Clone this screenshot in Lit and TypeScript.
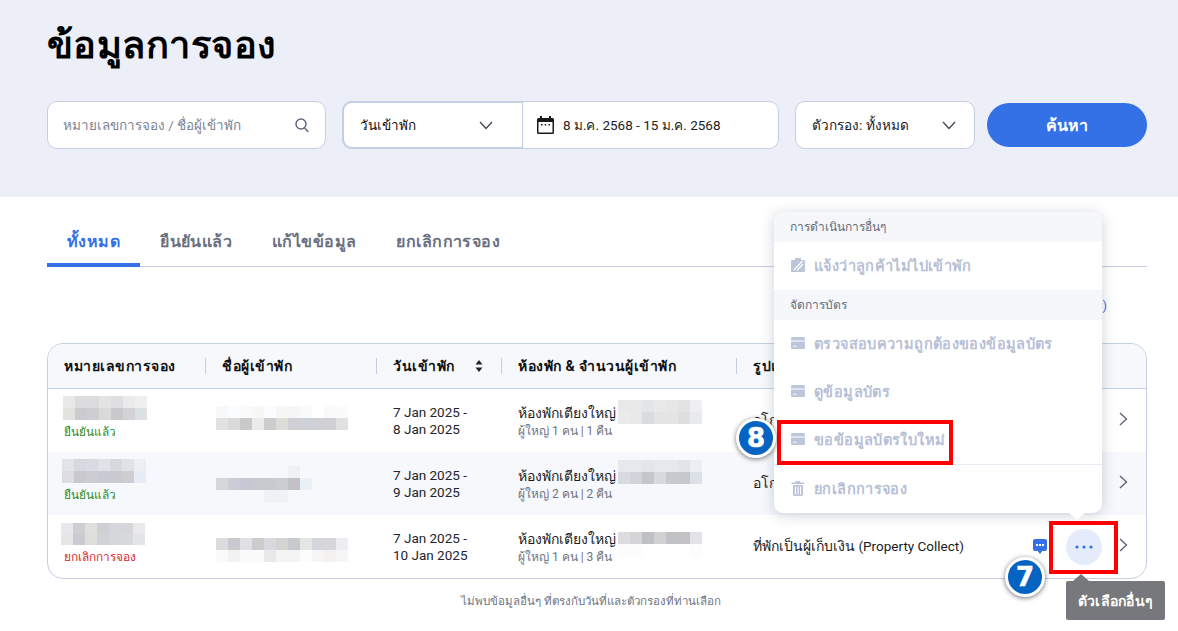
import { LitElement, html, css } from "lit";
import { customElement } from "lit/decorators.js";

type Mos = { rows: string[][]; cell?: number };

const hex = (s: string) => s.split(" ").map((c) => (c === "-" ? "transparent" : "#" + c));

const chevDown = html`<svg class="chev" width="16" height="16" viewBox="0 0 16 16" fill="none" stroke="#3c4252" stroke-width="1.2"><path d="M2 5l6 6.500L14 5"/></svg>`;
const chevRight = html`<svg class="chevr" width="12" height="18" viewBox="0 0 12 18" fill="none" stroke="#5b6478" stroke-width="1.4"><path d="M3 3l6.500 6L3 15"/></svg>`;
const cardIcon = html`<svg class="mi" width="14" height="12" viewBox="0 0 14 12"><path fill="#bcc5da" d="M1.500 0h11A1.500 1.500 0 0 1 14 1.500V3.500H0V1.500A1.500 1.500 0 0 1 1.500 0zM0 4.500h14v6a1.500 1.500 0 0 1-1.500 1.500h-11A1.500 1.500 0 0 1 0 10.500z"/><rect x="2" y="8.500" width="4" height="1.500" fill="#dfe4ef"/></svg>`;

const rows = [
  {
    id: { rows: [hex("e8e8e6 dcdcdf dcdcdf e4e4e4 dfdfe2 ebebeb f0f0f2"), hex("e2e2df cbcbcf cfcfd3 dadada c9c9cc d3d3d5 dde0e2")] } as Mos,
    idPad: 7, idLeft: 15,
    status: "ยืนยันแล้ว", cancel: false,
    name: { rows: [hex("f8f8f8 fafcff fafafa f7f7f5 fbfcff f8f7f5 f6f6f6 f9fafc ffffff fbfafa fbfbfb"), hex("e3e2e3 dadada c9c9cb eaebea cccccf dddcd9 d0d0d4 cfd1d9 d0d0d4 d0d0d3 e2e1e1")] } as Mos,
    nameTop: -14.5,
    d1: "7 Jan 2025 -", d2: "8 Jan 2025",
    room: { rows: [hex("e9e9ea e9e9ea e3e4e6 e9e9ea e6e6e7 e4e2e4 eeeff1"), hex("ebebeb e8e8e9 dadbdd e4e4e5 e4e4e5 dedede e9eaec")] } as Mos,
    roomTop: -13,
    guests: "ผู้ใหญ่ 1 คน | 1 คืน",
    pay: "อโกด้าเป็นผู้เก็บเงิน", payEn: "",
    more: false,
  },
  {
    id: { rows: [hex("e3e4ea d7d9e0 d9dbe2 e1e2e8 d7d8df e1e2e8 ebeef5"), hex("dcdde3 c8c8ce ccccd3 c9cad4 c9cad1 cdcdd2 e8ebf3")] } as Mos,
    idPad: 7, idLeft: 14,
    status: "ยืนยันแล้ว", cancel: false,
    name: { rows: [hex("- - - - - - f0f1f5 -"), hex("d6d7da cacdd5 c6c9d3 c9cad0 c9cad0 cccdd2 c2c2c6 e8f0f8"), hex("- - - - f0f1f5 f0f1f5 - -")] } as Mos,
    nameTop: -17.5,
    d1: "7 Jan 2025 -", d2: "9 Jan 2025",
    room: { rows: [hex("e7e8ed e7e8ed e4e5ea e7e8ed e7e8ed e3e4e9 eceef3"), hex("d9dae0 d3d4da c5c6cc d9dae0 c8c9d0 c7c8ce dce0e8")] } as Mos,
    roomTop: -16,
    guests: "ผู้ใหญ่ 2 คน | 2 คืน",
    pay: "อโกด้าเป็นผู้เก็บเงิน", payEn: "",
    more: false,
  },
  {
    id: { rows: [hex("e8e8ea cdced1 dfdfdb cfd0d3 d4d6dc d6d7d8 eaeaec"), hex("e6e6e7 cacbce dddddb d2d3d6 d6d7db d8d9da e4e5e7")], cell: 11 } as Mos,
    idPad: 8, idLeft: 13,
    status: "ยกเลิกการจอง", cancel: true,
    name: { rows: [hex("dcdcde c9cad0 e0e1e4 cdcccb d8dae0 d5d4d4 c9cad0 e4e6e4 d5d5dc d7d7d9 eeeef2"), hex("fafafa f2f2f2 fafafa fafafa e9e9ec f4f4f4 f4f4f4 fcfcfc f6f6f6 f3f2f1 f6f6f7")] } as Mos,
    nameTop: -8.5,
    d1: "7 Jan 2025 -", d2: "10 Jan 2025",
    room: { rows: [hex("dcdcde d5d4d6 bfc0c4 d1d1d2 c1c2c5 c4c2c4 e1e3e6"), hex("fcfcfc fcfcfc ffffff ffffff ffffff ffffff fcfcfc")] } as Mos,
    roomTop: -7,
    guests: "ผู้ใหญ่ 1 คน | 3 คืน",
    pay: "ที่พักเป็นผู้เก็บเงิน", payEn: "(Property Collect)",
    more: true,
  },
];

const mosaic = (m: Mos, style = "") => {
  const c = m.cell ?? 12;
  const cols = m.rows[0].length;
  return html`<div class="mosaic" style="grid-template-columns:repeat(${cols},12px);grid-auto-rows:${c}px;${style}">
    ${m.rows.flat().map((b) => html`<i style="background:${b}"></i>`)}
  </div>`;
};

/* zero-height item in flow: draws the mosaic at `top` px from the centre of its line */
const floating = (m: Mos, top: number) => {
  const h = m.rows.length * (m.cell ?? 12);
  return mosaic(m, `margin-top:${top}px;margin-bottom:${-h - top}px;`);
};

@customElement("app-root")
export class AppRoot extends LitElement {
  static styles = css`
    :host {
      display: block;
      position: relative;
      width: 1178px;
      height: 631px;
      overflow: hidden;
      background: #fff;
      color: #1a1c24;
      font-family: Roboto, "Noto Sans", sans-serif;
      font-size: 14px;
    }
    * { box-sizing: border-box; }
    .hero { background: #eceff8; height: 197px; padding: 20px 31px 0 47px; }
    h1 { margin: 0; font-size: 38px; line-height: 50px; font-weight: 700; color: #000; letter-spacing: 0.45px; }
    .controls { display: flex; align-items: center; margin-top: 31px; height: 48px; }
    .field {
      height: 48px; background: #fff; border: 1px solid #c5cfe4; border-radius: 10px;
      display: flex; align-items: center;
    }
    .search { width: 279px; padding: 0 16px 0 15px; justify-content: space-between; color: #7d8394; font-size: 13.5px; }
    .combo { margin-left: 16px; width: 437px; padding: 0; }
    .combo .sel {
      width: 181px; height: 48px; display: flex; align-items: center; justify-content: space-between;
      padding: 0 28px 0 16px; border: 2px solid #c5cfe4; border-right-width: 1px; border-radius: 10px 0 0 10px;
      margin-left: -1px; font-weight: 500; font-size: 13.5px; color: #111;
    }
    .combo .date { display: flex; align-items: center; gap: 9px; padding-left: 14px; color: #222; font-size: 13.5px; }
    .filter { margin-left: 16px; width: 180px; padding: 0 17px 0 16px; justify-content: space-between; color: #222; font-size: 13.6px; }
    .go {
      margin-left: 12px; width: 160px; height: 44px; border-radius: 22px; background: #3470e6;
      color: #fff; font-weight: 700; font-size: 16px; letter-spacing: 0.2px; display: flex; align-items: center; justify-content: center;
    }
    .tabs { margin: 20px 31px 0 47px; display: flex; height: 50px; border-bottom: 1px solid #c5cfe4; }
    .tab {
      padding: 3px 20px 0; display: flex; align-items: center; height: 50px; font-size: 16px; font-weight: 600; letter-spacing: 0.42px;
      color: #6b7080; margin-bottom: -1px; border-bottom: 4px solid transparent; white-space: nowrap;
    }
    .tab.on { color: #3470e6; border-bottom-color: #3470e6; border-radius: 3px 3px 0 0; }
    .count { margin: 28px 31px 0 47px; height: 22px; text-align: right; color: #3470e6; font-size: 13px; padding-right: 40px; line-height: 22px; }
    .table { margin: 26px 31px 0 47px; border: 1px solid #c5cfe4; border-radius: 16px; overflow: hidden; height: 236px; }
    .row { display: grid; grid-template-columns: 158px 171px 125px 235px 1fr; height: 63px; }
    .row.alt { background: #f6f8fc; }
    .row.head { height: 45px; background: #f6f8fc; border-bottom: 1px solid #c5cfe4; font-weight: 700; font-size: 14px; letter-spacing: 0.5px; color: #111; }
    .th { display: flex; align-items: center; gap: 20px; padding-left: 16px; position: relative; white-space: nowrap; }
    .th + .th::before { content: ""; position: absolute; left: -1px; top: 14px; height: 16px; width: 1px; background: #c5cfe4; }
    .td { display: flex; flex-direction: column; min-width: 0; }
    .status { margin-top: 3px; padding-left: 16px; font-size: 11.8px; line-height: 18px; color: #2b8a1e; }
    .status.cancel { color: #d8262c; }
    .namec { justify-content: center; padding-left: 10px; }
    .datec { justify-content: center; padding-left: 16px; line-height: 17px; color: #23252d; font-size: 13.5px; }
    .roomc { justify-content: center; padding: 2px 0 0 16px; }
    .roomline { display: flex; align-items: center; height: 18px; line-height: 18px; font-size: 14px; white-space: nowrap; }
    .roomline span { width: 100px; flex: none; }
    .guests { font-size: 12px; line-height: 18px; color: #6e7482; white-space: nowrap; }
    .payc { flex-direction: row; align-items: center; padding: 0 17px 0 16px; font-size: 14px; white-space: nowrap; }
    .payc .tx { flex: 1; padding-bottom: 2px; }
    .payc .en { font-size: 13.5px; }
    .chat { display: block; margin-right: 19px; }
    .dots { width: 36px; height: 36px; border-radius: 50%; background: #e4ecfb; display: flex; align-items: center; justify-content: center; margin-right: 15px; }
    .chevr { display: block; margin-bottom: 3px; }
    .mosaic { display: grid; width: max-content; }
    .mosaic i { display: block; }
    .foot { text-align: center; margin-top: 13px; padding-left: 4px; font-size: 11.5px; color: #6e7482; }

    .pop {
      position: absolute; left: 774px; top: 212px; width: 328px; height: 301px; background: #fff; border-radius: 9px;
      box-shadow: 0 2px 14px rgba(40, 50, 80, 0.22); display: flex; flex-direction: column;
    }
    .pop::after {
      content: ""; position: absolute; left: 295px; bottom: -7px; width: 0; height: 0;
      border-left: 8px solid transparent; border-right: 8px solid transparent; border-top: 7px solid #fff;
    }
    .sec { height: 30px; padding: 0 0 1px 16px; background: #f6f7fb; color: #676c7a; font-size: 12px; display: flex; align-items: center; flex: none; }
    .sec.first { border-radius: 9px 9px 0 0; }
    .mit { height: 48px; flex: none; padding: 0 0 2px 17px; display: flex; align-items: center; gap: 9px; color: #b7c0d6; font-size: 14.5px; font-weight: 600; letter-spacing: 0.38px; white-space: nowrap; }
    .mit.sep { border-top: 1px solid #e8ebf3; height: 49px; }
    .mi { display: block; flex: none; }

    .mark { position: absolute; border: 4px solid #f00; pointer-events: none; }
    .mark.m8 { left: 777px; top: 420px; width: 176px; height: 45px; }
    .mark.m7 { left: 1049px; top: 521px; width: 69px; height: 53px; }
    .badge {
      position: absolute; width: 40px; height: 40px; border-radius: 50%; background: #0563c1; border: 3px solid #fff;
      box-shadow: 0 1px 5px rgba(0, 0, 0, 0.55); color: #fff; font: 700 26px/34px "DejaVu Sans", sans-serif;
      text-align: center; -webkit-text-stroke: 0.6px #fff;
    }
    .b8 { left: 736px; top: 418px; }
    .b7 { left: 1005px; top: 557px; }
    .tip {
      position: absolute; left: 1066px; top: 581px; width: 99px; height: 39px; background: #77787c; border-radius: 2px;
      color: #fff; font-weight: 700; font-size: 14px; letter-spacing: 0.3px; display: flex; align-items: center; justify-content: center; white-space: nowrap;
    }
    .tip::before {
      content: ""; position: absolute; left: 7px; top: -7px; width: 0; height: 0;
      border-left: 8px solid transparent; border-right: 8px solid transparent; border-bottom: 7px solid #77787c;
    }
  `;

  render() {
    return html`
      <div class="hero">
        <h1>ข้อมูลการจอง</h1>
        <div class="controls">
          <div class="field search">
            <span>หมายเลขการจอง / ชื่อผู้เข้าพัก</span>
            <svg width="14" height="15" viewBox="0 0 14 15" fill="none" stroke="#626a7d" stroke-width="1.5"><circle cx="6" cy="6" r="5"/><path d="M9.700 10l3.600 4"/></svg>
          </div>
          <div class="field combo">
            <div class="sel"><span>วันเข้าพัก</span>${chevDown}</div>
            <div class="date">
              <svg width="17" height="18" viewBox="0 0 17 18"><path fill="#1a1a1a" d="M3 0h2v2h7V0h2v2h1.500A1.500 1.500 0 0 1 17 3.500v13a1.500 1.500 0 0 1-1.500 1.500h-14A1.500 1.500 0 0 1 0 16.500v-13A1.500 1.500 0 0 1 1.500 2H3zM1.500 6v10.500h14V6z"/><path fill="#1a1a1a" d="M4 8h1.500v1.500H4zM7.700 8h1.500v1.500H7.700zM11.500 8H13v1.500h-1.500z"/></svg>
              <span>8 ม.ค. 2568 - 15 ม.ค. 2568</span>
            </div>
          </div>
          <div class="field filter"><span>ตัวกรอง: ทั้งหมด</span>${chevDown}</div>
          <div class="go">ค้นหา</div>
        </div>
      </div>

      <div class="tabs">
        <div class="tab on">ทั้งหมด</div>
        <div class="tab">ยืนยันแล้ว</div>
        <div class="tab">แก้ไขข้อมูล</div>
        <div class="tab">ยกเลิกการจอง</div>
      </div>
      <div class="count">ทั้งหมด (3)</div>

      <div class="table">
        <div class="row head">
          <div class="th">หมายเลขการจอง</div>
          <div class="th">ชื่อผู้เข้าพัก</div>
          <div class="th">วันเข้าพัก
            <svg width="8" height="14" viewBox="0 0 8 14" fill="#23252d"><path d="M4 1l3.500 4.500h-7zM4 13L.5 8.500h7z"/></svg>
          </div>
          <div class="th">ห้องพัก & จำนวนผู้เข้าพัก</div>
          <div class="th">รูปแบบการชำระเงิน</div>
        </div>
        ${rows.map(
          (r, i) => html`
            <div class="row ${i === 1 ? "alt" : ""}">
              <div class="td">
                ${mosaic(r.id, `margin-top:${r.idPad}px;margin-left:${r.idLeft}px;`)}
                <div class="status ${r.cancel ? "cancel" : ""}">${r.status}</div>
              </div>
              <div class="td namec">${floating(r.name, r.nameTop)}</div>
              <div class="td datec"><div>${r.d1}</div><div>${r.d2}</div></div>
              <div class="td roomc">
                <div class="roomline"><span>ห้องพักเตียงใหญ่</span>${floating(r.room, r.roomTop)}</div>
                <div class="guests">${r.guests}</div>
              </div>
              <div class="td payc">
                <span class="tx">${r.pay} <span class="en">${r.payEn}</span></span>
                ${r.more
                  ? html`<svg class="chat" width="14" height="16" viewBox="0 0 14 16"><path fill="#3470e6" d="M2 0h10a2 2 0 0 1 2 2v8a2 2 0 0 1-2 2H9.300L7 15l-2.300-3H2a2 2 0 0 1-2-2V2a2 2 0 0 1 2-2z"/><g fill="#fff"><rect x="3" y="5" width="2" height="2"/><rect x="6" y="5" width="2" height="2"/><rect x="9" y="5" width="2" height="2"/></g></svg>
                      <div class="dots"><svg width="18" height="4" viewBox="0 0 18 4" fill="#3470e6"><circle cx="2" cy="2" r="1.600"/><circle cx="9" cy="2" r="1.600"/><circle cx="16" cy="2" r="1.600"/></svg></div>`
                  : ""}
                ${chevRight}
              </div>
            </div>
          `
        )}
      </div>
      <div class="foot">ไม่พบข้อมูลอื่นๆ ที่ตรงกับวันที่และตัวกรองที่ท่านเลือก</div>

      <div class="pop">
        <div class="sec first">การดำเนินการอื่นๆ</div>
        <div class="mit">
          <svg class="mi" width="14" height="14" viewBox="0 0 14 14"><path fill="#bcc5da" d="M1 2h3V0h6v2h3a1 1 0 0 1 1 1v10a1 1 0 0 1-1 1H1a1 1 0 0 1-1-1V3a1 1 0 0 1 1-1z"/><path stroke="#fff" stroke-width="1.2" d="M3 12L11.500 3M6 12.500l6-6.500"/></svg>
          แจ้งว่าลูกค้าไม่ไปเข้าพัก
        </div>
        <div class="sec">จัดการบัตร</div>
        <div class="mit">${cardIcon}ตรวจสอบความถูกต้องของข้อมูลบัตร</div>
        <div class="mit">${cardIcon}ดูข้อมูลบัตร</div>
        <div class="mit">${cardIcon}ขอข้อมูลบัตรใบใหม่</div>
        <div class="mit sep">
          <svg class="mi" width="14" height="15" viewBox="0 0 14 15"><path fill="#bcc5da" d="M5 0h4l.7 1.500H13.500V3H.5V1.500h3.800zM2 4h10v9.500a1.500 1.500 0 0 1-1.500 1.500h-7A1.500 1.500 0 0 1 2 13.500zm2 1.500v8h1v-8zm2.500 0v8h1v-8zm2.500 0v8h1v-8z"/></svg>
          ยกเลิกการจอง
        </div>
      </div>

      <div class="mark m8"></div>
      <div class="mark m7"></div>
      <div class="badge b8">8</div>
      <div class="badge b7">7</div>
      <div class="tip">ตัวเลือกอื่นๆ</div>
    `;
  }
}
